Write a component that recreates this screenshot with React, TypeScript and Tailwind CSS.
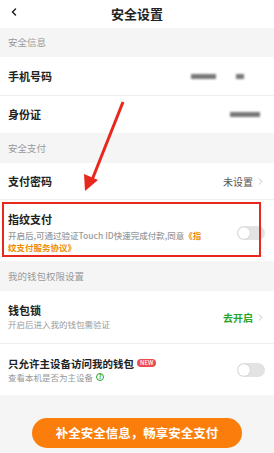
import { ChevronLeft, ChevronRight } from 'lucide-react';

const font = { fontFamily: '"Noto Sans CJK SC", "Noto Sans", sans-serif' };

function SectionHeader({ title, className }: { title: string; className: string }) {
  return (
    <div className={`flex items-center bg-[#f5f5f5] px-2 text-[9.5px] text-[#999] ${className}`}>
      {title}
    </div>
  );
}

function Toggle() {
  return (
    <div className="flex h-[14px] w-[28px] items-center rounded-full bg-[#e3e3e3] px-[1px]">
      <div className="h-[12px] w-[12px] rounded-full bg-white shadow-[0_0_1px_rgba(0,0,0,0.3)]" />
    </div>
  );
}

function Blur({ className }: { className: string }) {
  return <div className={`h-[5px] bg-[#777] blur-[1px] ${className}`} />;
}

export default function App() {
  return (
    <div style={font} className="relative h-[453px] w-[274px] overflow-hidden bg-white text-[#222]">
      <header className="relative flex h-[28px] items-center justify-center">
        <ChevronLeft className="absolute left-[8px] top-[6px] h-[12px] w-[12px]" strokeWidth={3} />
        <h1 className="text-[13px] font-bold">安全设置</h1>
      </header>

      <SectionHeader title="安全信息" className="h-[29px]" />

      <div className="flex h-[39px] items-center justify-between border-b border-[#eee] px-2">
        <span className="text-[11px] font-bold">手机号码</span>
        <div className="mr-[22px] flex items-center gap-[20px]">
          <Blur className="w-[25px]" />
          <Blur className="w-[8px]" />
        </div>
      </div>

      <div className="flex h-[37px] items-center justify-between px-2">
        <span className="text-[11px] font-bold">身份证</span>
        <Blur className="mr-[6px] w-[30px]" />
      </div>

      <SectionHeader title="安全支付" className="h-[30px]" />

      <div className="flex h-[37px] items-center justify-between border-b border-[#f0f0f0] px-2">
        <span className="text-[11px] font-bold">支付密码</span>
        <div className="flex items-center gap-[2px] text-[10px] text-[#555]">
          未设置
          <ChevronRight className="h-[11px] w-[11px] text-[#aaa]" strokeWidth={1.5} />
        </div>
      </div>

      <div className="relative flex h-[61px] items-start justify-between px-2 pt-[12px]">
        <div className="absolute left-[2px] right-[13px] top-[2px] bottom-[4px] border-2 border-[#e8281c]" />
        <div className="w-[199px]">
          <div className="text-[11px] font-bold leading-[14px]">指纹支付</div>
          <p className="mt-[3px] text-[8.5px] font-medium leading-[12px] text-[#999]">
            开启后,可通过验证Touch ID快速完成付款,同意<span className="font-bold text-[#f08c00]">《指纹支付服务协议》</span>
          </p>
        </div>
        <div className="mr-[1px] mt-[14px]">
          <Toggle />
        </div>
      </div>

      <SectionHeader title="我的钱包权限设置" className="h-[30px]" />

      <div className="flex h-[53px] items-center justify-between border-b border-[#eee] px-2">
        <div>
          <div className="text-[11px] font-bold leading-[15px]">钱包锁</div>
          <div className="text-[8.5px] leading-[13px] text-[#999]">开启后进入我的钱包需验证</div>
        </div>
        <div className="flex items-center gap-[2px] text-[10px] font-bold text-[#2aa52a]">
          去开启
          <ChevronRight className="h-[11px] w-[11px] text-[#aaa]" strokeWidth={1.5} />
        </div>
      </div>

      <div className="flex h-[51px] items-center justify-between px-2">
        <div>
          <div className="flex items-center gap-[3px] text-[10.5px] font-bold leading-[15px]">
            只允许主设备访问我的钱包
            <span className="rounded-full bg-[#ee4b4b] px-[3px] text-[6px] leading-[8px] font-medium text-white">NEW</span>
          </div>
          <div className="flex items-center gap-[3px] text-[8.5px] leading-[13px] text-[#999]">
            查看本机是否为主设备
            <span className="flex h-[8px] w-[8px] items-center justify-center rounded-full border border-[#2aa52a] text-[6px] font-bold leading-none text-[#2aa52a]">?</span>
          </div>
        </div>
        <div className="mr-[1px]">
          <Toggle />
        </div>
      </div>

      <div className="flex h-[58px] items-start justify-center bg-[#f5f5f5] pt-[23px]">
        <button className="h-[30px] w-[210px] rounded-full bg-[#fb7d0c] text-[12.5px] font-bold text-white">
          补全安全信息，畅享安全支付
        </button>
      </div>

      <svg className="pointer-events-none absolute left-0 top-0" width="274" height="453">
        <line x1="123" y1="102" x2="92" y2="180" stroke="#e8281c" strokeWidth="3" />
        <polygon points="85,191 84,174 98,180" fill="#e8281c" />
      </svg>
    </div>
  );
}
